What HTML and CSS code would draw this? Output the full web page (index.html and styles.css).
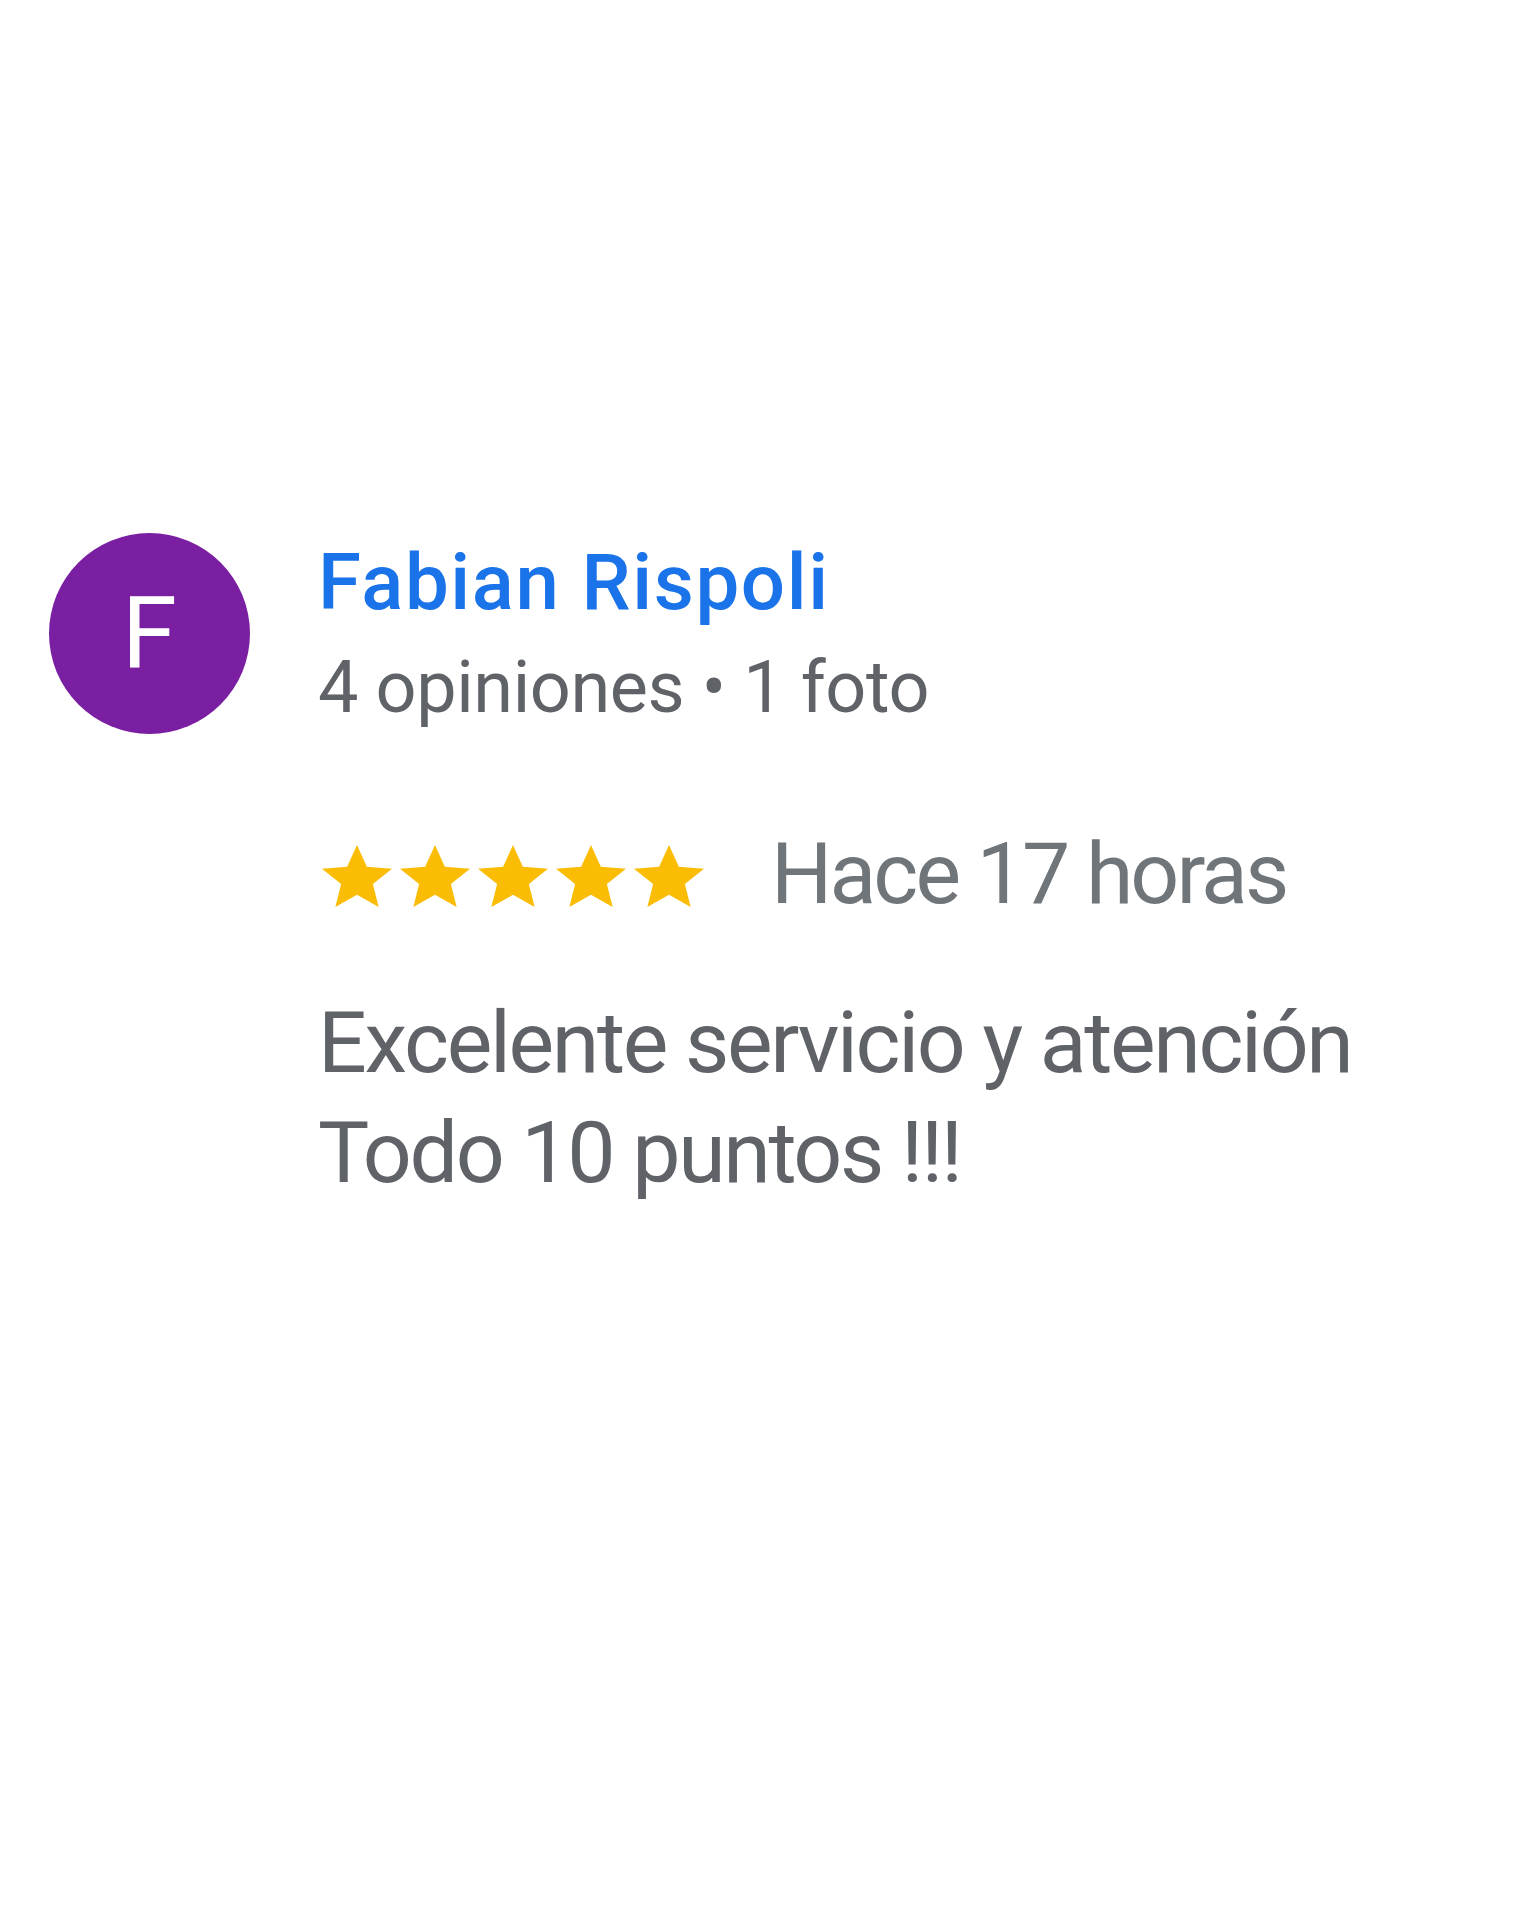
FILE: index.html
```html
<!DOCTYPE html>
<html lang="es">
<head>
<meta charset="utf-8">
<title>Reseña</title>
<link rel="stylesheet" href="styles.css">
</head>
<body>
<div class="review">
  <div class="avatar">F</div>
  <div class="content">
    <div class="name">Fabian Rispoli</div>
    <div class="meta">4 opiniones • 1 foto</div>
    <div class="rating">
      <div class="stars">
        <svg viewBox="2 2 20 19" preserveAspectRatio="none"><path d="M12 17.27L18.18 21l-1.64-7.03L22 9.24l-7.19-.61L12 2 9.19 8.630 2 9.24l5.46 4.73L5.82 21z"/></svg>
        <svg viewBox="2 2 20 19" preserveAspectRatio="none"><path d="M12 17.27L18.18 21l-1.64-7.03L22 9.24l-7.19-.61L12 2 9.19 8.63 2 9.24l5.46 4.73L5.82 21z"/></svg>
        <svg viewBox="2 2 20 19" preserveAspectRatio="none"><path d="M12 17.27L18.18 21l-1.64-7.03L22 9.24l-7.19-.61L12 2 9.19 8.63 2 9.24l5.46 4.73L5.82 21z"/></svg>
        <svg viewBox="2 2 20 19" preserveAspectRatio="none"><path d="M12 17.27L18.18 21l-1.64-7.03L22 9.24l-7.19-.61L12 2 9.19 8.63 2 9.24l5.46 4.73L5.82 21z"/></svg>
        <svg viewBox="2 2 20 19" preserveAspectRatio="none"><path d="M12 17.27L18.18 21l-1.64-7.03L22 9.24l-7.19-.61L12 2 9.19 8.63 2 9.24l5.46 4.73L5.82 21z"/></svg>
      </div>
      <span class="time">Hace 17 horas</span>
    </div>
    <p class="text">Excelente servicio y atención<br>Todo 10 puntos !!!</p>
  </div>
</div>
</body>
</html>
```

FILE: styles.css
```css
html, body {
  margin: 0;
  padding: 0;
  background: #ffffff;
}
body {
  font-family: Roboto, "Liberation Sans", Arial, sans-serif;
  width: 1536px;
  height: 1920px;
}
.review {
  display: flex;
  align-items: flex-start;
  padding: 533px 0 0 49px;
}
.avatar {
  width: 201px;
  height: 201px;
  border-radius: 50%;
  background: #7b1fa2;
  color: #ffffff;
  font-size: 100px;
  line-height: 201px;
  text-align: center;
  flex: none;
}
.content {
  margin-left: 68px;
  display: flex;
  flex-direction: column;
}
.name {
  font-size: 78px;
  font-weight: 500;
  line-height: 100px;
  color: #1a73e8;
  letter-spacing: 1.6px;
}
.meta {
  margin-top: 5px;
  font-size: 72px;
  line-height: 100px;
  color: #5f6368;
  letter-spacing: -0.4px;
}
.rating {
  margin-top: 81px;
  display: flex;
  align-items: center;
  height: 110px;
}
.stars {
  display: flex;
  gap: 8px;
  margin-left: 4px;
  margin-top: 4px;
}
.stars svg {
  width: 70px;
  height: 62px;
  fill: #fbbc04;
  display: block;
}
.time {
  margin-left: 67px;
  font-size: 86px;
  line-height: 110px;
  color: #70757a;
  letter-spacing: -2.9px;
}
.text {
  margin: 59px 0 0;
  font-size: 86px;
  line-height: 110px;
  color: #5f6368;
  letter-spacing: -2.35px;
}
```
